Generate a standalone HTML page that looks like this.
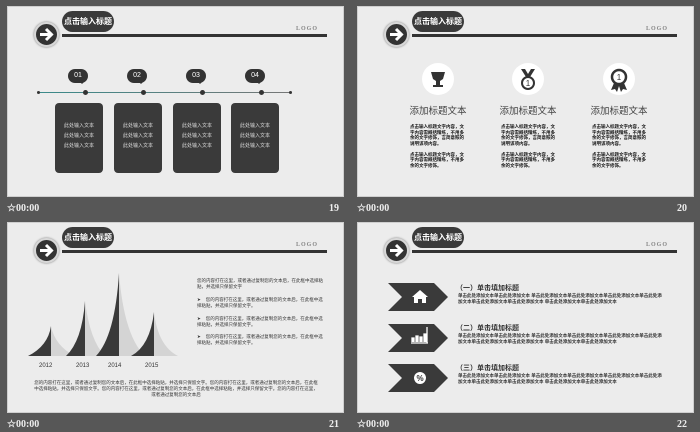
<!DOCTYPE html>
<html><head><meta charset="utf-8"><style>
*{margin:0;padding:0;box-sizing:border-box}
body{width:700px;height:432px;background:#575757;position:relative;overflow:hidden;font-family:"Liberation Sans","Noto Sans CJK SC",sans-serif}
.q{position:absolute;width:350px;height:216px}
.s{position:absolute;left:7px;top:6px;width:337px;height:191px;background:#ececec;border:1px solid #cfcfcf}
.a{position:absolute}
.circ{left:34px;top:22px;width:25px;height:25px;border-radius:50%;background:#333;border:2px solid #d8d8d8;box-shadow:0 0 2px #777}
.pill{left:62px;top:11px;width:52px;height:21px;border-radius:11px;background:#3a3a3a;color:#fff;font-size:8px;font-weight:bold;line-height:21px;text-align:center}
.hl{left:62px;top:34px;width:265px;height:3px;background:#333}
.logo{left:296px;top:26px;font-size:6px;color:#888;font-family:"Liberation Serif",serif;font-weight:bold;letter-spacing:1px}
.ft{position:absolute;top:203px;color:#eee;font-family:"Liberation Serif",serif;font-weight:bold;font-size:10px}
.box{width:48px;height:70px;border-radius:4px;background:#3a3a3a;color:#ddd;font-size:5px;text-align:center;padding-top:18px;line-height:10px}
.bub{width:20px;height:14px;border-radius:8px;background:#333;color:#fff;font-size:7px;text-align:center;line-height:14px}
.bub:after{content:"";position:absolute;left:11px;top:12px;border:3px solid transparent;border-top-color:#333}
.dot{width:5px;height:5px;border-radius:50%;background:#333}
.ic{width:32px;height:32px;border-radius:50%;background:#fff}
.t20{font-size:9.5px;color:#444;width:80px;text-align:center}
.p{font-size:4.5px;line-height:5.5px;color:#111;font-weight:bold}
.g{font-size:4.5px;line-height:6px;color:#333}
.h22{font-size:7px;font-weight:bold;color:#333}
</style></head><body>

<!-- Q1 -->
<div class="q" style="left:0;top:0">
<div class="s"></div>
<div class="a circ"><svg width="21" height="21" viewBox="0 0 21 21"><path d="M4 10.5h11M10 5l5.5 5.5L10 16" stroke="#fff" stroke-width="3" fill="none"/></svg></div>
<div class="a pill">点击输入标题</div><div class="a hl"></div><div class="a logo">LOGO</div>
<div class="a" style="left:38px;top:92px;width:253px;height:1px;background:linear-gradient(90deg,#3a8a8a,#777)"></div>
<div class="a dot" style="left:37px;top:91px;width:3px;height:3px"></div><div class="a dot" style="left:289px;top:91px;width:3px;height:3px"></div>
<div class="a dot" style="left:83px;top:90px"></div><div class="a dot" style="left:141px;top:90px"></div><div class="a dot" style="left:200px;top:90px"></div><div class="a dot" style="left:259px;top:90px"></div>
<div class="a bub" style="left:68px;top:69px">01</div><div class="a bub" style="left:127px;top:69px">02</div><div class="a bub" style="left:186px;top:69px">03</div><div class="a bub" style="left:245px;top:69px">04</div>
<div class="a box" style="left:55px;top:103px">此处输入文本<br>此处输入文本<br>此处输入文本</div>
<div class="a box" style="left:114px;top:103px">此处输入文本<br>此处输入文本<br>此处输入文本</div>
<div class="a box" style="left:173px;top:103px">此处输入文本<br>此处输入文本<br>此处输入文本</div>
<div class="a box" style="left:231px;top:103px">此处输入文本<br>此处输入文本<br>此处输入文本</div>
<div class="ft" style="left:7px">☆00:00</div><div class="ft" style="left:329px">19</div>
</div>

<!-- Q2 -->
<div class="q" style="left:350px;top:0">
<div class="s"></div>
<div class="a circ"><svg width="21" height="21" viewBox="0 0 21 21"><path d="M4 10.5h11M10 5l5.5 5.5L10 16" stroke="#fff" stroke-width="3" fill="none"/></svg></div>
<div class="a pill">点击输入标题</div><div class="a hl"></div><div class="a logo">LOGO</div>
<div class="a ic" style="left:72px;top:63px"><svg width="32" height="32"><path d="M9 9h14l-2 7-3 2v4h3v2H11v-2h3v-4l-3-2z" fill="#333"/></svg></div>
<div class="a ic" style="left:162px;top:63px"><svg width="32" height="32"><path d="M9 6l5 8h4l5-8h-4l-3 5-3-5z" fill="#333"/><circle cx="16" cy="20" r="6" fill="none" stroke="#333" stroke-width="2"/><text x="16" y="23" font-size="8" text-anchor="middle" fill="#333">1</text></svg></div>
<div class="a ic" style="left:253px;top:63px"><svg width="32" height="32"><circle cx="16" cy="14" r="7" fill="none" stroke="#333" stroke-width="2.5"/><path d="M11 20l-3 7 4-1 2 3 2-6 2 6 2-3 4 1-3-7z" fill="#333"/><text x="16" y="17" font-size="8" text-anchor="middle" fill="#333">1</text></svg></div>
<div class="a t20" style="left:48px;top:103px">添加标题文本</div>
<div class="a t20" style="left:138px;top:103px">添加标题文本</div>
<div class="a t20" style="left:229px;top:103px">添加标题文本</div>
<div class="a p" style="left:60px;top:124px;width:58px">点击输入标题文字内容，文字内容需概括精练，不用多余的文字修饰，言简意赅的说明该项内容。<br><br>点击输入标题文字内容，文字内容需概括精练，不用多余的文字修饰。</div>
<div class="a p" style="left:151px;top:124px;width:58px">点击输入标题文字内容，文字内容需概括精练，不用多余的文字修饰，言简意赅的说明该项内容。<br><br>点击输入标题文字内容，文字内容需概括精练，不用多余的文字修饰。</div>
<div class="a p" style="left:242px;top:124px;width:58px">点击输入标题文字内容，文字内容需概括精练，不用多余的文字修饰，言简意赅的说明该项内容。<br><br>点击输入标题文字内容，文字内容需概括精练，不用多余的文字修饰。</div>
<div class="ft" style="left:7px">☆00:00</div><div class="ft" style="left:327px">20</div>
</div>

<!-- Q3 -->
<div class="q" style="left:0;top:216px">
<div class="s"></div>
<div class="a circ"><svg width="21" height="21" viewBox="0 0 21 21"><path d="M4 10.5h11M10 5l5.5 5.5L10 16" stroke="#fff" stroke-width="3" fill="none"/></svg></div>
<div class="a pill">点击输入标题</div><div class="a hl"></div><div class="a logo">LOGO</div>
<svg class="a" style="left:0;top:0" width="350" height="216">
<path d="M51 110Q55 130 75 140H51z" fill="#d4d4d4"/><path d="M51 110Q48 130 28 140H51z" fill="#3a3a3a"/>
<path d="M85 85Q90 125 105 140H85z" fill="#d4d4d4"/><path d="M85 85Q82 125 66 140H85z" fill="#3a3a3a"/>
<path d="M119 57Q124 120 145 140H119z" fill="#d4d4d4"/><path d="M119 57Q115 120 96 140H119z" fill="#3a3a3a"/>
<path d="M154 96Q158 130 178 140H154z" fill="#d4d4d4"/><path d="M154 96Q150 130 131 140H154z" fill="#3a3a3a"/>
</svg>
<div class="a g" style="left:39px;top:147px;font-size:6px">2012</div><div class="a g" style="left:76px;top:147px;font-size:6px">2013</div><div class="a g" style="left:108px;top:147px;font-size:6px">2014</div><div class="a g" style="left:145px;top:147px;font-size:6px">2015</div>
<div class="a g" style="left:197px;top:62px;width:126px">您的内容打在这里，或者通过复制您的文本后，在此框中选择粘贴，并选择只保留文字</div>
<div class="a g" style="left:197px;top:81px;width:126px">➤&nbsp;&nbsp;&nbsp;&nbsp;您的内容打在这里，或者通过复制您的文本后，在此框中选择粘贴，并选择只保留文字。</div>
<div class="a g" style="left:197px;top:100px;width:126px">➤&nbsp;&nbsp;&nbsp;&nbsp;您的内容打在这里，或者通过复制您的文本后，在此框中选择粘贴，并选择只保留文字。</div>
<div class="a g" style="left:197px;top:118px;width:126px">➤&nbsp;&nbsp;&nbsp;&nbsp;您的内容打在这里，或者通过复制您的文本后，在此框中选择粘贴，并选择只保留文字。</div>
<div class="a g" style="left:34px;top:164px;width:284px;text-align:center">您的内容打在这里，或者通过复制您的文本后，在此框中选择粘贴，并选择只保留文字。您的内容打在这里，或者通过复制您的文本后，在此框中选择粘贴，并选择只保留文字。您的内容打在这里，或者通过复制您的文本后，在此框中选择粘贴，并选择只保留文字。您的内容打在这里，或者通过复制您的文本后</div>
<div class="ft" style="left:7px">☆00:00</div><div class="ft" style="left:329px">21</div>
</div>

<!-- Q4 -->
<div class="q" style="left:350px;top:216px">
<div class="s"></div>
<div class="a circ"><svg width="21" height="21" viewBox="0 0 21 21"><path d="M4 10.5h11M10 5l5.5 5.5L10 16" stroke="#fff" stroke-width="3" fill="none"/></svg></div>
<div class="a pill">点击输入标题</div><div class="a hl"></div><div class="a logo">LOGO</div>
<svg class="a" style="left:0;top:0" width="350" height="216">
<path d="M38 67H84L98 81 84 95H38L52 81z" fill="#3a3a3a"/>
<path d="M38 108H84L98 122 84 136H38L52 122z" fill="#3a3a3a"/>
<path d="M38 148H84L98 162 84 176H38L52 162z" fill="#3a3a3a"/>
<path d="M62 81l8-7 8 7h-2v6h-4v-4h-4v4h-4v-6z" fill="#fff"/>
<path d="M61 127h17M62 126v-4h2v4M66 126v-6h2v6M70 126v-5h2v5M74 126v-8h2v8M77 127v-16" stroke="#fff" stroke-width="1.3" fill="#fff"/>
<circle cx="70" cy="162" r="6" fill="#fff"/><text x="70" y="165" font-size="8" text-anchor="middle" fill="#333" font-weight="bold">%</text>
</svg>
<div class="a h22" style="left:106px;top:67px">（一）单击填加标题</div>
<div class="a g" style="left:108px;top:77px;width:205px;font-weight:bold">单击此处添加文本单击此处添加文本 单击此处添加文本单击此处添加文本单击此处添加文本单击此处添加文本单击此处添加文本单击此处添加文本 单击此处添加文本单击此处添加文本</div>
<div class="a h22" style="left:106px;top:107px">（二）单击填加标题</div>
<div class="a g" style="left:108px;top:117px;width:205px;font-weight:bold">单击此处添加文本单击此处添加文本 单击此处添加文本单击此处添加文本单击此处添加文本单击此处添加文本单击此处添加文本单击此处添加文本 单击此处添加文本单击此处添加文本</div>
<div class="a h22" style="left:106px;top:147px">（三）单击填加标题</div>
<div class="a g" style="left:108px;top:157px;width:205px;font-weight:bold">单击此处添加文本单击此处添加文本 单击此处添加文本单击此处添加文本单击此处添加文本单击此处添加文本单击此处添加文本单击此处添加文本 单击此处添加文本单击此处添加文本</div>
<div class="ft" style="left:7px">☆00:00</div><div class="ft" style="left:327px">22</div>
</div>
</body></html>
